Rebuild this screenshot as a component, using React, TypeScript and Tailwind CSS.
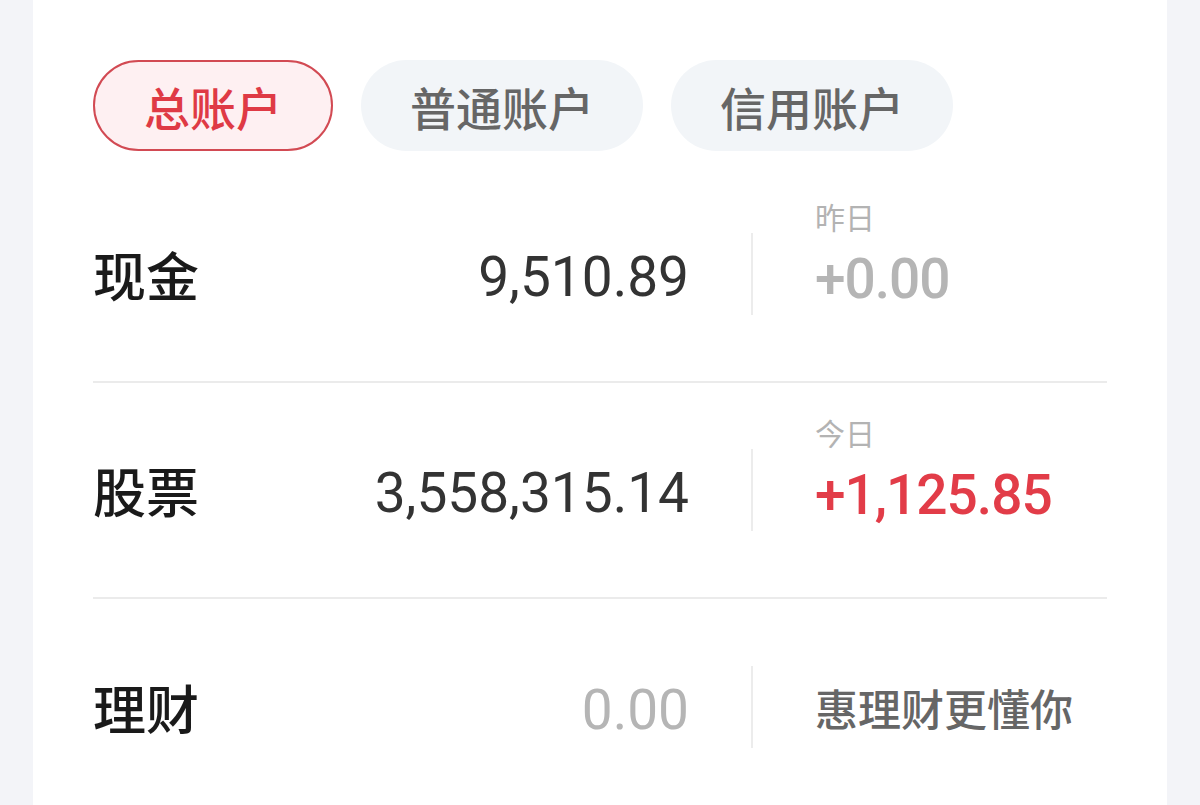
const cjk = "font-['Noto_Sans_CJK_SC','Noto_Sans',sans-serif]"
const num = "font-['Roboto','Noto_Sans_CJK_SC',sans-serif]"

const tabs = [
    { name: "总账户", active: true },
    { name: "普通账户", active: false },
    { name: "信用账户", active: false },
]

type Row = {
    label: string
    value: string
    valueMuted?: boolean
    sideLabel?: string
    side: string
    sideKind: "muted" | "red" | "text"
}

const rows: Row[] = [
    { label: "现金", value: "9,510.89", sideLabel: "昨日", side: "+0.00", sideKind: "muted" },
    { label: "股票", value: "3,558,315.14", sideLabel: "今日", side: "+1,125.85", sideKind: "red" },
    { label: "理财", value: "0.00", valueMuted: true, side: "惠理财更懂你", sideKind: "text" },
]

const AssetRow = ({ row, last }: { row: Row; last: boolean }) => {
    return (
        <div className={`flex items-center h-[216px] ${last ? "" : "border-b-2 border-[#ebebeb]"}`}>
            <div className="w-[596px] flex items-center justify-between">
                <span className={`${cjk} text-[53px] leading-none font-medium text-[#1a1a1a]`}>{row.label}</span>
                <span
                    className={`${num} mt-[7px] text-[55px] leading-none tracking-[0px] ${row.valueMuted ? "text-[#b5b5b5]" : "text-[#333333]"}`}
                >
                    {row.value}
                </span>
            </div>
            <div className="w-[2px] h-[82px] bg-[#ececec] mx-[62px]"></div>
            {row.sideKind === "text" ? (
                <span className={`${cjk} text-[43px] leading-none font-medium text-[#666666]`}>{row.side}</span>
            ) : (
                <div className="flex flex-col mb-[40px]">
                    <span className={`${cjk} text-[30px] leading-[34px] text-[#b3b3b3]`}>{row.sideLabel}</span>
                    <span
                        className={`${num} mt-[16px] text-[55px] leading-[60px] tracking-[-1px] font-medium ${row.sideKind === "red" ? "text-[#e23c48]" : "text-[#b5b5b5]"}`}
                    >
                        {row.side}
                    </span>
                </div>
            )}
        </div>
    )
}

const App = () => {
    return (
        <div className="w-[1200px] h-[805px] overflow-hidden bg-[#f3f4f8] px-[33px]">
            <div className="bg-white h-full px-[60px] pt-[60px]">
                <div className="flex gap-[28px]">
                    {tabs.map((t) => (
                        <div
                            key={t.name}
                            className={`${cjk} h-[91px] px-[49px] rounded-full flex items-center text-[46px] leading-none font-medium ${
                                t.active
                                    ? "bg-[#fef0f2] border-2 border-[#d24a53] text-[#df3a45]"
                                    : "bg-[#f2f5f8] text-[#666666]"
                            }`}
                        >
                            {t.name}
                        </div>
                    ))}
                </div>
                <div className="mt-[16px]">
                    {rows.map((r, i) => (
                        <AssetRow key={r.label} row={r} last={i === rows.length - 1} />
                    ))}
                </div>
            </div>
        </div>
    )
}

export default App
